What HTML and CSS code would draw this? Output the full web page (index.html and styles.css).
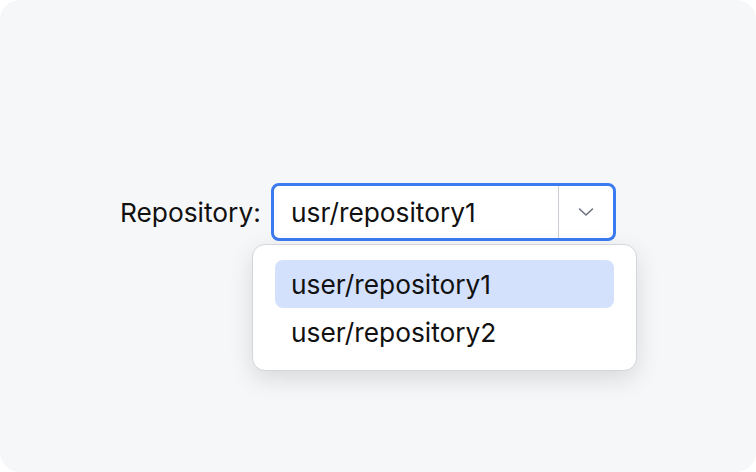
FILE: index.html
```html
<!DOCTYPE html>
<html>
<head>
<meta charset="utf-8">
<link rel="stylesheet" href="styles.css">
</head>
<body>
<div class="frame">
  <div class="row">
    <label class="label">Repository:</label>
    <div class="select-wrap">
      <div class="select">
        <div class="value">usr/repository1</div>
        <div class="toggle">
          <svg width="16" height="10" viewBox="0 0 16 10"><path d="M1.5 2 L8 8 L14.5 2" fill="none" stroke="#6b7280" stroke-width="1.6" stroke-linecap="round" stroke-linejoin="round"/></svg>
        </div>
      </div>
      <div class="menu">
        <div class="item active">user/repository1</div>
        <div class="item">user/repository2</div>
      </div>
    </div>
  </div>
</div>
</body>
</html>
```
FILE: styles.css
```css
html, body {
  margin: 0;
  padding: 0;
  background: #ffffff;
}
.frame {
  width: 756px;
  height: 472px;
  box-sizing: border-box;
  background: #f6f7f9;
  border-radius: 20px;
  padding: 183px 0 0 120px;
  font-family: Inter, "Noto Sans", sans-serif;
  color: #111111;
}
.row {
  display: flex;
  align-items: center;
}
.label {
  font-size: 26.3px;
  width: 151px;
}
.select-wrap {
  position: relative;
}
.select {
  width: 345px;
  height: 58px;
  box-sizing: border-box;
  border: 3px solid #3a7bf0;
  border-radius: 8px;
  background: #ffffff;
  display: flex;
  align-items: stretch;
}
.value {
  flex: 1;
  display: flex;
  align-items: center;
  padding-left: 17px;
  font-size: 26.3px;
  border-right: 1px solid #cbced4;
}
.toggle {
  width: 54px;
  display: flex;
  align-items: center;
  justify-content: center;
}
.menu {
  position: absolute;
  left: -19px;
  top: 61px;
  width: 385px;
  box-sizing: border-box;
  background: #ffffff;
  border: 1px solid #d4d6db;
  border-radius: 13px;
  padding: 15px 22px 14px;
  box-shadow: 0 8px 24px rgba(0, 0, 0, 0.12);
}
.item {
  height: 48px;
  display: flex;
  align-items: center;
  padding-left: 16px;
  border-radius: 8px;
  font-size: 26.3px;
}
.item.active {
  background: #d3e1fd;
}
```
